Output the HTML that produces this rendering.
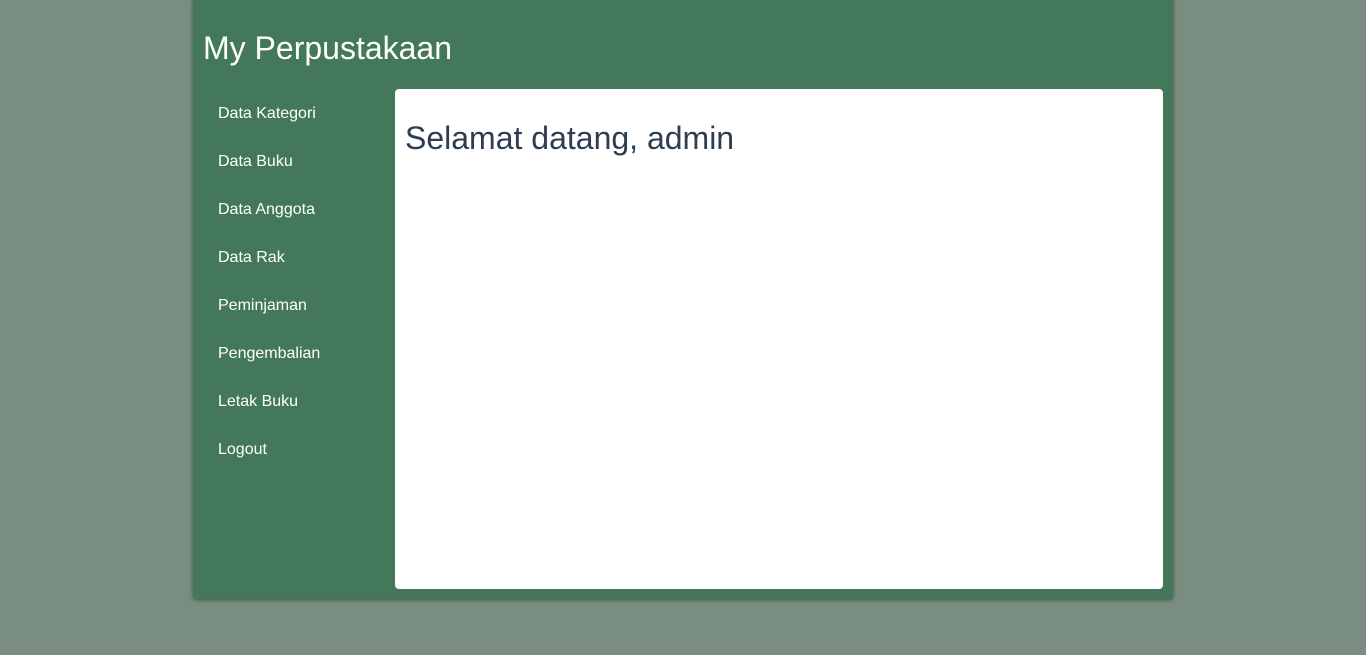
<!DOCTYPE html>
<html><head><meta charset="utf-8"><style>
html,body{margin:0;padding:0;}
body{width:1366px;height:655px;background:#798e80;font-family:"Liberation Sans",Arial,sans-serif;position:relative;overflow:hidden;}
.card{position:absolute;left:193px;top:-4px;width:980px;height:603px;background:#43785a;border-radius:3px;box-shadow:0 1px 4px rgba(0,0,0,.45);}
h1{position:absolute;left:10px;top:34px;margin:0;font-weight:normal;font-size:32px;color:#fff;line-height:36px;}
ul{list-style:none;margin:0;padding:0;position:absolute;left:25px;top:109px;}
li{color:#fff;font-size:16px;height:48px;line-height:18px;}
.main{position:absolute;left:202px;top:93px;width:768px;height:500px;background:#fff;border-radius:4px;}
.main h2{margin:0;position:absolute;left:10px;top:31px;font-weight:normal;font-size:32px;color:#2c3e50;line-height:36px;}
</style></head><body>
<div class="card">
<h1>My Perpustakaan</h1>
<ul><li>Data Kategori</li><li>Data Buku</li><li>Data Anggota</li><li>Data Rak</li><li>Peminjaman</li><li>Pengembalian</li><li>Letak Buku</li><li>Logout</li></ul>
<div class="main"><h2>Selamat datang, admin</h2></div>
</div>
</body></html>
